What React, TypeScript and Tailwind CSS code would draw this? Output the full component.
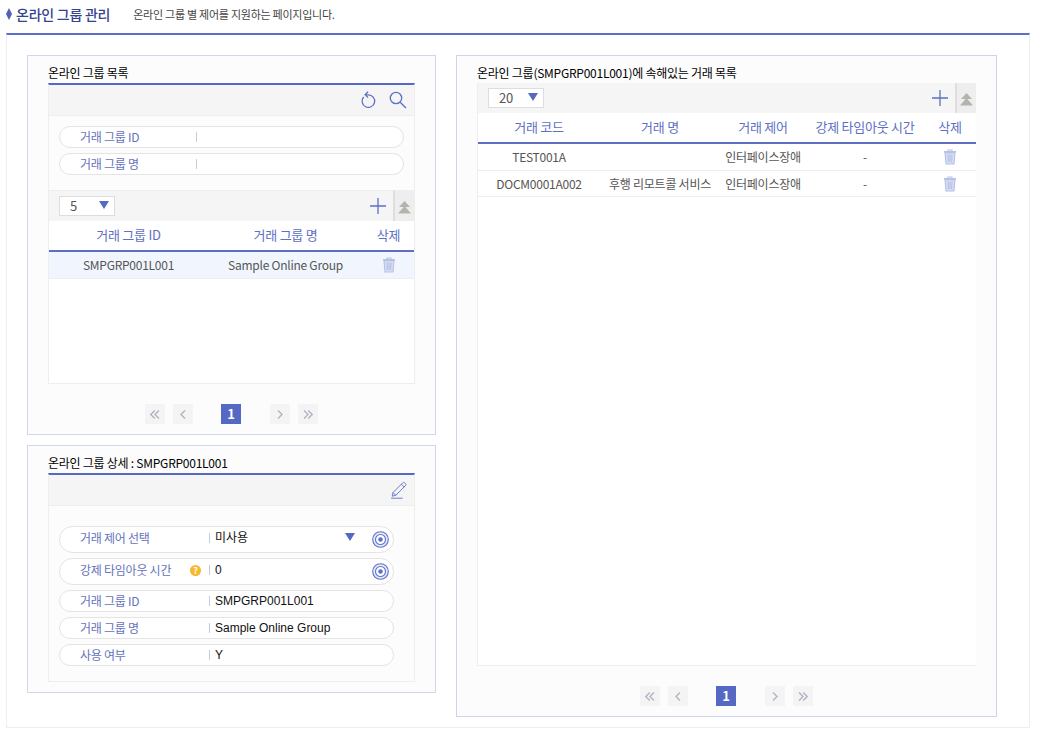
// Online group management page
import type { ReactNode } from "react";

const leftCols = "grid grid-cols-[159px_155px_1fr]";
const rightCols = "grid grid-cols-[122px_120px_86px_118px_1fr]";

function Refresh() {
  return (
    <svg width="18" height="20" viewBox="0 0 18 20" fill="none" stroke="#5b6fc6" strokeWidth="1.3">
      <path d="M4.6 7a6.3 6.3 0 1 0 4.6-2.2H6.6" />
      <path d="M9 1.8 6.2 4.8 9 7.6" />
    </svg>
  );
}

function Search() {
  return (
    <svg width="18" height="18" viewBox="0 0 18 18" fill="none" stroke="#5b6fc6" strokeWidth="1.3">
      <circle cx="7" cy="7" r="5.7" />
      <path d="m11.2 11.2 5.8 5.8" />
    </svg>
  );
}

function Plus() {
  return (
    <svg width="16" height="16" viewBox="0 0 16 16" stroke="#5b6fc6" strokeWidth="1.3">
      <path d="M8 0v16M0 8h16" />
    </svg>
  );
}

function ScrollTop() {
  return (
    <div className="flex h-full w-[21px] items-center justify-center border-l-2 border-[#dedede] bg-[#eeeeee]">
      <svg width="13" height="13" viewBox="0 0 13 13" fill="#b4b4ae" className="mt-[2px]">
        <path d="M6.5 0 12 6H1z" />
        <path d="M6.5 5 13 12.5H0z" />
      </svg>
    </div>
  );
}

function Trash() {
  return (
    <svg width="14" height="16" viewBox="0 0 14 16" fill="none" stroke="#b6c1e6" strokeWidth="1.1">
      <path d="M1 2.8h12" strokeWidth="1.6" />
      <path d="M5 2.4V1h4v1.4" />
      <path d="M2 3.6 3 15h8l1-11.4z" fill="#d6def3" />
      <path d="M5 5.5 5.4 13M7 5.5V13M9 5.5 8.6 13" />
    </svg>
  );
}

function Pencil() {
  return (
    <svg width="18" height="18" viewBox="0 0 18 18" fill="none" stroke="#6b7dcc" strokeWidth="1">
      <path d="M3 11.5 12.5 2c.8-.8 1.6-.8 2.3-.1l.6.6c.7.7.7 1.5-.1 2.3L5.8 14.3l-3.6.9z" />
      <path d="m11.3 3.2 3 3M3 11.5l2.8 2.8" />
      <path d="M1 17.2h11.5" />
    </svg>
  );
}

function Target() {
  return (
    <svg width="17" height="17" viewBox="0 0 17 17" fill="none" stroke="#5f72c9" strokeWidth="1.1">
      <circle cx="8.5" cy="8.5" r="7.8" fill="#e6eaf8" />
      <circle cx="8.5" cy="8.5" r="5" fill="#ffffff" />
      <circle cx="8.5" cy="8.5" r="2.3" fill="#5f72c9" stroke="none" />
    </svg>
  );
}

function Help() {
  return (
    <span className="flex h-[11px] w-[11px] items-center justify-center rounded-full bg-[#f5b82e] text-[9px] leading-none font-bold text-white">
      ?
    </span>
  );
}

function Caret() {
  return <span className="block h-0 w-0 border-x-[5.5px] border-t-[8px] border-x-transparent border-t-[#5468c4]" />;
}

function SizeSelect({ value }: { value: string }) {
  return (
    <div className="flex h-[20px] w-[56px] items-center justify-between border border-[#dddddd] bg-white pr-[5px] pl-[10px] text-[13px] text-[#555555]">
      <span>{value}</span>
      <span className="mb-[3px]">
        <Caret />
      </span>
    </div>
  );
}

function Field({
  label,
  value,
  tall,
  split,
  help,
  children,
}: {
  label: string;
  value?: string;
  tall?: boolean;
  split: string;
  help?: boolean;
  children?: ReactNode;
}) {
  return (
    <div className={`flex items-center rounded-full border border-[#e4e4e4] bg-white pl-[20px] ${tall ? "h-[27px]" : "h-[22px]"}`}>
      <div className={`flex shrink-0 items-center justify-between pr-[8px] text-[12px] text-[#6472bd] ${split} ${tall ? "mb-[3px]" : ""}`}>
        <span>{label}</span>
        {help && <Help />}
      </div>
      <span className={`h-[10px] w-px bg-[#c5cbe0] ${tall ? "mb-[3px]" : ""}`} />
      <div className="flex flex-1 items-center justify-between pr-[4px] pl-[5px] font-['Liberation_Sans','Noto_Sans_CJK_KR',sans-serif] text-[12px] tracking-normal text-[#111111]">
        <span className={tall ? "mb-[3px]" : ""}>{value}</span>
        {children}
      </div>
    </div>
  );
}

function Pager() {
  const btn = "flex h-[20px] w-[20px] items-center justify-center";
  const line = { fill: "none", stroke: "#aeb4c2", strokeWidth: 1.4 };
  return (
    <div className="mt-[20px] flex justify-center">
      <span className={`${btn} bg-[#f4f4f4]`}>
        <svg width="10" height="9" viewBox="0 0 10 9" {...line}>
          <path d="M4.8.5.8 4.5l4 4M9 .5l-4 4 4 4" />
        </svg>
      </span>
      <span className={`${btn} ml-[8px] bg-[#f4f4f4]`}>
        <svg width="6" height="9" viewBox="0 0 6 9" {...line}>
          <path d="M5 .5 1 4.5l4 4" />
        </svg>
      </span>
      <span className={`${btn} ml-[28px] bg-[#5468c4] text-[13px] font-bold text-white`}>1</span>
      <span className={`${btn} ml-[29px] bg-[#f4f4f4]`}>
        <svg width="6" height="9" viewBox="0 0 6 9" {...line}>
          <path d="m1 .5 4 4-4 4" />
        </svg>
      </span>
      <span className={`${btn} ml-[8px] bg-[#f4f4f4]`}>
        <svg width="10" height="9" viewBox="0 0 10 9" {...line}>
          <path d="m1 .5 4 4-4 4M5.2.5l4 4-4 4" />
        </svg>
      </span>
    </div>
  );
}

function Head({ cols, labels }: { cols: string; labels: string[] }) {
  return (
    <div className={`${cols} h-[31px] items-center border-b-2 border-[#5d6fc0] bg-white pb-[1px] text-center text-[13px] text-[#5e6fc4]`}>
      {labels.map((l) => (
        <span key={l} className="whitespace-nowrap">
          {l}
        </span>
      ))}
    </div>
  );
}

function Cell({ children }: { children?: ReactNode }) {
  return <span className="whitespace-nowrap">{children}</span>;
}

export default function App() {
  return (
    <div className="h-[737px] w-[1037px] overflow-hidden bg-white font-['Noto_Sans_CJK_KR',sans-serif] tracking-[-0.25px]">
      <div className="ml-[6px] flex h-[33px] items-center pb-[5px]">
        <svg width="6" height="12" viewBox="0 0 6 12" fill="#4f62b8" className="mr-[4px]">
          <path d="M3 0 6 6l-3 6-3-6z" />
        </svg>
        <h1 className="text-[14px] font-medium text-[#33438f]">온라인 그룹 관리</h1>
        <p className="ml-[23px] text-[11px] text-[#444444]">온라인 그룹 별 제어를 지원하는 페이지입니다.</p>
      </div>

      <div className="ml-[6px] flex h-[695px] w-[1024px] gap-[20px] border-x border-b border-t-2 border-[#eeeeee] border-t-[#5b6dc4] pt-[20px] pl-[20px]">
        <div className="flex w-[409px] flex-col gap-[10px]">
          <section className="h-[380px] border border-[#d2d8ec] bg-[#fcfcfc] px-[20px]">
            <h2 className="flex h-[27px] items-end pb-px text-[12px] text-black">온라인 그룹 목록</h2>
            <div className="h-[301px] w-[367px] border-x border-b border-t-2 border-[#eeeeee] border-t-[#5468c4] bg-white">
              <div className="flex h-[31px] items-center justify-end gap-[12px] border-b border-[#eeeeee] bg-[#f5f5f5] pr-[7px]">
                <Refresh />
                <Search />
              </div>
              <div className="flex h-[74px] flex-col gap-[5px] bg-[#fcfcfc] px-[10px] pt-[10px]">
                <Field label="거래 그룹 ID" split="w-[116px]" />
                <Field label="거래 그룹 명" split="w-[116px]" />
              </div>
              <div className="flex h-[31px] items-center justify-between border-t border-[#eeeeee] bg-[#f5f5f5] pl-[10px]">
                <SizeSelect value="5" />
                <div className="flex h-full items-center gap-[7px]">
                  <Plus />
                  <ScrollTop />
                </div>
              </div>
              <Head cols={leftCols} labels={["거래 그룹 ID", "거래 그룹 명", "삭제"]} />
              <div className={`${leftCols} h-[27px] items-center border-b border-[#eeeeee] bg-[#f1f6fe] text-center text-[12px] text-[#555555]`}>
                <Cell>SMPGRP001L001</Cell>
                <Cell>Sample Online Group</Cell>
                <span className="flex justify-center">
                  <Trash />
                </span>
              </div>
            </div>
            <Pager />
          </section>

          <section className="h-[248px] border border-[#d2d8ec] bg-[#fcfcfc] px-[20px]">
            <h2 className="flex h-[27px] items-end pb-px text-[12px] text-black">온라인 그룹 상세 : SMPGRP001L001</h2>
            <div className="h-[209px] w-[367px] border-x border-b border-t-2 border-[#eeeeee] border-t-[#5468c4]">
              <div className="flex h-[31px] items-center justify-end border-b border-[#eeeeee] bg-[#f5f5f5] pr-[6px]">
                <Pencil />
              </div>
              <div className="flex w-[345px] flex-col gap-[5px] pt-[20px] pl-[10px]">
                <Field label="거래 제어 선택" value="미사용" tall split="w-[129px]">
                  <span className="flex items-center gap-[17px]">
                    <span className="mb-[5px]">
                      <Caret />
                    </span>
                    <Target />
                  </span>
                </Field>
                <Field label="강제 타임아웃 시간" value="0" tall help split="w-[129px]">
                  <Target />
                </Field>
                <Field label="거래 그룹 ID" value="SMPGRP001L001" split="w-[129px]" />
                <Field label="거래 그룹 명" value="Sample Online Group" split="w-[129px]" />
                <Field label="사용 여부" value="Y" split="w-[129px]" />
              </div>
            </div>
          </section>
        </div>

        <section className="h-[662px] w-[541px] border border-[#ccd3ee] bg-[#fcfcfc] px-[20px]">
          <h2 className="flex h-[27px] items-end pb-px text-[12px] text-black">
            온라인 그룹(SMPGRP001L001)에 속해있는 거래 목록
          </h2>
          <div className="h-[583px] w-[499px] border-b border-l border-[#eeeeee] bg-white">
            <div className="flex h-[30px] items-center justify-between bg-[#f5f5f5] pl-[10px]">
              <SizeSelect value="20" />
              <div className="flex h-full items-center gap-[7px]">
                <Plus />
                <ScrollTop />
              </div>
            </div>
            <Head cols={rightCols} labels={["거래 코드", "거래 명", "거래 제어", "강제 타임아웃 시간", "삭제"]} />
            <div className={`${rightCols} h-[27px] items-center border-b border-[#eeeeee] text-center text-[12px] text-[#555555]`}>
              <Cell>TEST001A</Cell>
              <Cell />
              <Cell>인터페이스장애</Cell>
              <Cell>-</Cell>
              <span className="flex justify-center">
                <Trash />
              </span>
            </div>
            <div className={`${rightCols} h-[26px] items-center border-b border-[#eeeeee] text-center text-[12px] text-[#555555]`}>
              <Cell>DOCM0001A002</Cell>
              <Cell>후행 리모트콜 서비스</Cell>
              <Cell>인터페이스장애</Cell>
              <Cell>-</Cell>
              <span className="flex justify-center">
                <Trash />
              </span>
            </div>
          </div>
          <Pager />
        </section>
      </div>
    </div>
  );
}
